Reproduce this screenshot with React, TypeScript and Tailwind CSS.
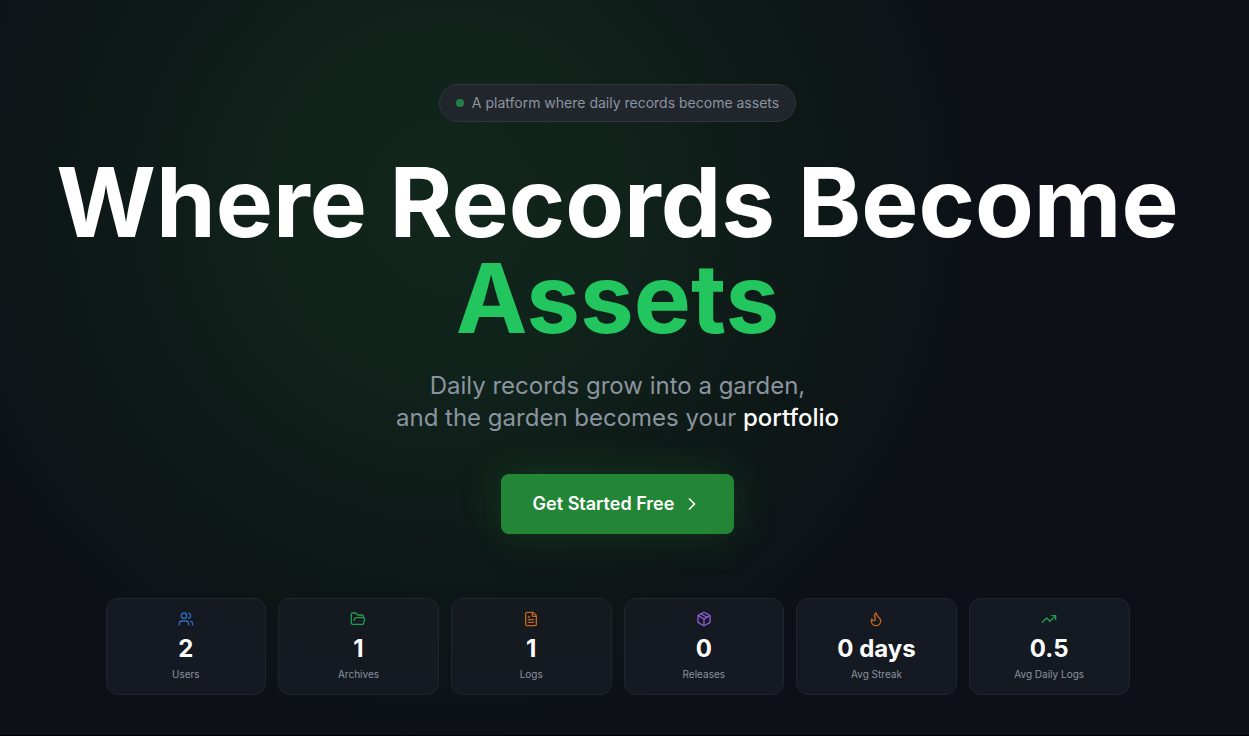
import { ChevronRight, FileText, Flame, FolderOpen, Package, TrendingUp, Users } from 'lucide-react';

const stats = [
  { label: 'Users', value: '2', icon: Users, color: 'text-[#2f6bbd]' },
  { label: 'Archives', value: '1', icon: FolderOpen, color: 'text-[#1f9d4f]' },
  { label: 'Logs', value: '1', icon: FileText, color: 'text-[#c5651f]' },
  { label: 'Releases', value: '0', icon: Package, color: 'text-[#8a5fd3]' },
  { label: 'Avg Streak', value: '0 days', icon: Flame, color: 'text-[#c5651f]' },
  { label: 'Avg Daily Logs', value: '0.5', icon: TrendingUp, color: 'text-[#1f9d4f]' },
];

export default function App() {
  return (
    <main className="min-h-screen border-b border-black bg-[#0d1017] bg-[radial-gradient(circle_560px_at_36%_28%,#11261c_0%,#10231b_30%,#0e1817_65%,#0d1017_100%)] pr-3.5 font-['Inter',sans-serif] text-white">
      <section className="flex flex-col items-center px-4 pt-[84px] pb-10 text-center">
        <div className="mb-8 flex items-center gap-2 rounded-full border border-[#30363d] bg-[#21262d] px-4 py-2 text-sm text-[#8b949e]">
          <span className="h-2 w-2 rounded-full bg-[#238049]" />
          A platform where daily records become assets
        </div>

        <h1 className="mb-6 text-8xl leading-none font-bold">
          Where Records Become
          <span className="block text-[#22c55e]">Assets</span>
        </h1>

        <p className="mb-10 text-2xl text-[#8b949e]">
          Daily records grow into a garden,
          <br />
          and the garden becomes your <span className="font-medium text-white">portfolio</span>
        </p>

        <button
          type="button"
          className="mb-16 flex h-[60px] items-center gap-2 rounded-lg bg-[#238636] px-8 text-lg font-semibold shadow-[0_0_40px_rgba(35,134,54,0.3)] hover:bg-[#2ea043]"
        >
          Get Started Free
          <ChevronRight className="h-5 w-5" />
        </button>

        <div className="grid w-full max-w-5xl grid-cols-6 gap-3">
          {stats.map(({ label, value, icon: Icon, color }) => (
            <div
              key={label}
              className="flex flex-col items-center rounded-xl border border-[#21262d] bg-[#161b22]/90 p-3"
            >
              <Icon className={`mb-1.5 h-4 w-4 ${color}`} />
              <div className="mb-0.5 text-2xl font-bold">{value}</div>
              <div className="text-[10px] leading-[15px] text-[#8b949e]">{label}</div>
            </div>
          ))}
        </div>
      </section>
    </main>
  );
}
